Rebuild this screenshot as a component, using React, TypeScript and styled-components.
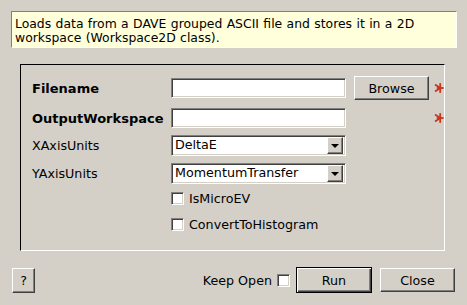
import React from "react";
import styled, { createGlobalStyle, css } from "styled-components";

const Global = createGlobalStyle`
  html, body { margin: 0; padding: 0; }
  body {
    width: 467px; height: 305px; overflow: hidden;
    background: #d4d0c8;
    font-family: "DejaVu Sans", "Liberation Sans", sans-serif;
    font-size: 12.7px;
    color: #000;
  }
`;

const Dialog = styled.div`
  width: 467px;
  height: 305px;
  box-sizing: border-box;
  padding-top: 11px;
  display: flex;
  flex-direction: column;
`;

const Description = styled.div`
  margin: 0 10px 0 11px;
  height: 37px;
  box-sizing: border-box;
  background: #ffffdc;
  border: 1px solid;
  border-color: #808080 #ffffff #ffffff #808080;
  padding: 5px 2px 0 3px;
  line-height: 14px;
  font-size: 12.4px;
  word-spacing: 0.45px;
  white-space: nowrap;
`;

const Group = styled.div`
  margin: 16px 22px 0 20px;
  height: 187px;
  box-sizing: border-box;
  border: 1px solid;
  border-color: #000 #fff #fff #000;
  padding: 11px 0 0 11px;
  display: flex;
  flex-direction: column;
  overflow: hidden;
`;

const Row = styled.div<{ $mt: number }>`
  display: flex;
  align-items: center;
  height: 24px;
  margin-top: ${(p) => p.$mt}px;
`;

const Label = styled.div<{ $bold?: boolean }>`
  width: 139px;
  flex: none;
  font-size: ${(p) => (p.$bold ? "13px" : "12.7px")};
  font-weight: ${(p) => (p.$bold ? "bold" : "normal")};
  white-space: nowrap;
`;

const sunken = css`
  box-sizing: border-box;
  border: 1px solid;
  border-color: #808080 #ffffff #ffffff #808080;
  box-shadow: inset 1px 1px 0 #404040, inset -1px -1px 0 #d4d0c8;
  background: #fff;
`;

const raised = css`
  box-sizing: border-box;
  background: #d4d0c8;
  border: 1px solid;
  border-color: #ffffff #404040 #404040 #ffffff;
  box-shadow: inset -1px -1px 0 #808080, inset 1px 1px 0 #d4d0c8;
`;

const TextInput = styled.div`
  ${sunken};
  width: 175px;
  height: 20px;
  flex: none;
`;

const Combo = styled.div`
  ${sunken};
  width: 175px;
  height: 21px;
  flex: none;
  display: flex;
  align-items: center;
  padding: 2px 2px 2px 3px;
`;

const ComboText = styled.span`
  flex: 1;
  font-size: 12.7px;
  line-height: 16px;
`;

const ArrowBtn = styled.div`
  ${raised};
  width: 16px;
  height: 17px;
  display: flex;
  align-items: center;
  justify-content: center;
`;

const Arrow = styled.div`
  width: 0;
  height: 0;
  border-left: 4px solid transparent;
  border-right: 4px solid transparent;
  border-top: 4px solid #000;
  margin-top: 1px;
`;

const Button = styled.div<{ $w: number; $h?: number; $default?: boolean }>`
  ${raised};
  width: ${(p) => p.$w}px;
  height: ${(p) => p.$h ?? 24}px;
  flex: none;
  display: flex;
  align-items: center;
  justify-content: center;
  font-size: 12.7px;
  ${(p) =>
    p.$default &&
    css`
      border: 1px solid #000;
      box-shadow: inset 1px 1px 0 #ffffff, inset -1px -1px 0 #404040,
        inset -2px -2px 0 #808080;
    `}
`;

const Required = styled.div`
  width: 11px;
  height: 14px;
  margin-left: 5px;
  flex: none;
  overflow: hidden;
  display: flex;
`;

const Spacer = styled.div<{ $w: number }>`
  width: ${(p) => p.$w}px;
  flex: none;
`;

const Check = styled.div`
  ${sunken};
  width: 13px;
  height: 13px;
  flex: none;
`;

const CheckLabel = styled.span`
  margin-left: 5px;
  font-size: 12.7px;
`;

const Indent = styled.div`
  width: 139px;
  flex: none;
`;

const Bottom = styled.div`
  margin: 16px 12px 0 12px;
  display: flex;
  align-items: center;
  height: 26px;
`;

const Grow = styled.div`
  flex: 1;
`;

const KeepOpen = styled.span`
  font-size: 12.7px;
  margin-right: 5px;
`;

const Asterisk = () => (
  <svg width="16" height="14" viewBox="0 0 16 14">
    <g stroke="#c8331e" strokeWidth="2.6" strokeLinecap="butt">
      <line x1="9" y1="7" x2="1.5" y2="2" />
      <line x1="9" y1="7" x2="1.5" y2="12" />
      <line x1="9" y1="7" x2="9" y2="0" />
      <line x1="9" y1="7" x2="9" y2="14" />
      <line x1="4" y1="7" x2="14" y2="7" />
    </g>
  </svg>
);

export default function App() {
  return (
    <>
      <Global />
      <Dialog>
        <Description>
          Loads data from a DAVE grouped ASCII file and stores it in a 2D
          <br />
          workspace (Workspace2D class).
        </Description>
        <Group>
          <Row $mt={0}>
            <Label $bold>Filename</Label>
            <TextInput />
            <Spacer $w={8} />
            <Button $w={75}>Browse</Button>
            <Required>
              <Asterisk />
            </Required>
          </Row>
          <Row $mt={6}>
            <Label $bold>OutputWorkspace</Label>
            <TextInput />
            <Spacer $w={83} />
            <Required>
              <Asterisk />
            </Required>
          </Row>
          <Row $mt={3}>
            <Label>XAxisUnits</Label>
            <Combo>
              <ComboText>DeltaE</ComboText>
              <ArrowBtn>
                <Arrow />
              </ArrowBtn>
            </Combo>
          </Row>
          <Row $mt={4}>
            <Label>YAxisUnits</Label>
            <Combo>
              <ComboText>MomentumTransfer</ComboText>
              <ArrowBtn>
                <Arrow />
              </ArrowBtn>
            </Combo>
          </Row>
          <Row $mt={1}>
            <Indent />
            <Check />
            <CheckLabel>IsMicroEV</CheckLabel>
          </Row>
          <Row $mt={2}>
            <Indent />
            <Check />
            <CheckLabel>ConvertToHistogram</CheckLabel>
          </Row>
        </Group>
        <Bottom>
          <Button $w={23} $h={25}>?</Button>
          <Grow />
          <KeepOpen>Keep Open</KeepOpen>
          <Check />
          <Spacer $w={6} />
          <Button $w={76} $h={26} $default>
            Run
          </Button>
          <Spacer $w={8} />
          <Button $w={75}>Close</Button>
        </Bottom>
      </Dialog>
    </>
  );
}
